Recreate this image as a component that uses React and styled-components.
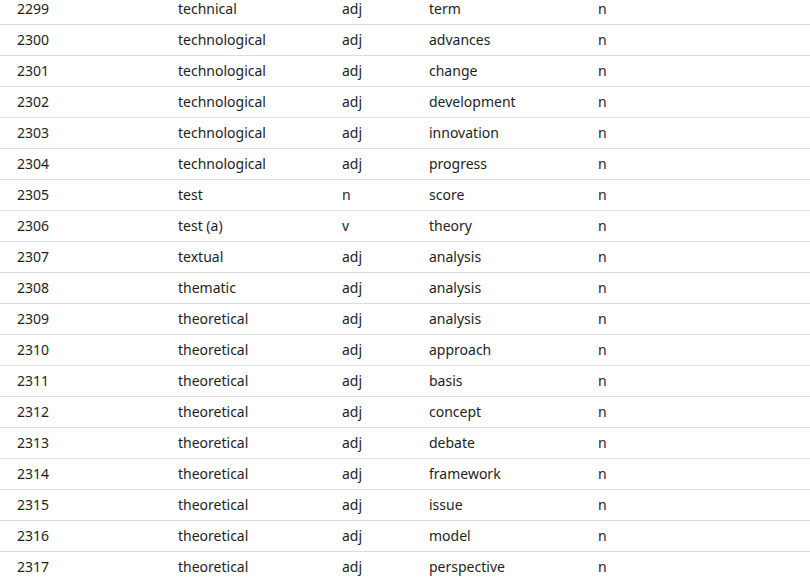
import React from "react";
import styled, { createGlobalStyle } from "styled-components";

const rows = [
  ["2299", "technical", "adj", "term", "n"],
  ["2300", "technological", "adj", "advances", "n"],
  ["2301", "technological", "adj", "change", "n"],
  ["2302", "technological", "adj", "development", "n"],
  ["2303", "technological", "adj", "innovation", "n"],
  ["2304", "technological", "adj", "progress", "n"],
  ["2305", "test", "n", "score", "n"],
  ["2306", "test (a)", "v", "theory", "n"],
  ["2307", "textual", "adj", "analysis", "n"],
  ["2308", "thematic", "adj", "analysis", "n"],
  ["2309", "theoretical", "adj", "analysis", "n"],
  ["2310", "theoretical", "adj", "approach", "n"],
  ["2311", "theoretical", "adj", "basis", "n"],
  ["2312", "theoretical", "adj", "concept", "n"],
  ["2313", "theoretical", "adj", "debate", "n"],
  ["2314", "theoretical", "adj", "framework", "n"],
  ["2315", "theoretical", "adj", "issue", "n"],
  ["2316", "theoretical", "adj", "model", "n"],
  ["2317", "theoretical", "adj", "perspective", "n"],
];

const GlobalStyle = createGlobalStyle`
  body {
    margin: 0;
    background: #fff;
    overflow: hidden;
    font-family: "Noto Sans", "Open Sans", sans-serif;
  }
`;

// page is scrolled a few px, so the first row is cut at the top
const Table = styled.div`
  margin-top: -6px;
  width: 810px;
`;

const Row = styled.div`
  box-sizing: border-box;
  display: grid;
  grid-template-columns: 161px 164px 87px 169px 1fr;
  align-items: center;
  height: 31px;
  padding: 0 0 2px 17px;
  border-bottom: 1px solid #dddddd;
  font-size: 14px;
  color: #1e1e1e;
`;

const Cell = styled.span`
  white-space: nowrap;
`;

export default function App() {
  return (
    <>
      <GlobalStyle />
      <Table>
        {rows.map((r) => (
          <Row key={r[0]}>
            {r.map((c, i) => (
              <Cell key={i}>{c}</Cell>
            ))}
          </Row>
        ))}
      </Table>
    </>
  );
}
